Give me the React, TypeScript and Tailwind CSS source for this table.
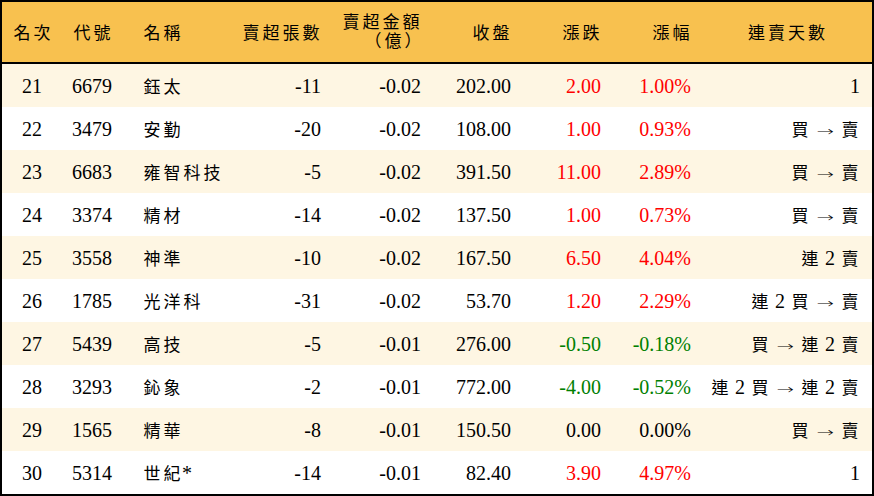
import React from "react";

type Row = {
  rank: string;
  code: string;
  name: string;
  lots: string;
  amt: string;
  close: string;
  chg: string;
  pct: string;
  days: string;
};

const rows: Row[] = [
  { rank: "21", code: "6679", name: "鈺太", lots: "-11", amt: "-0.02", close: "202.00", chg: "2.00", pct: "1.00%", days: "1" },
  { rank: "22", code: "3479", name: "安勤", lots: "-20", amt: "-0.02", close: "108.00", chg: "1.00", pct: "0.93%", days: "買 → 賣" },
  { rank: "23", code: "6683", name: "雍智科技", lots: "-5", amt: "-0.02", close: "391.50", chg: "11.00", pct: "2.89%", days: "買 → 賣" },
  { rank: "24", code: "3374", name: "精材", lots: "-14", amt: "-0.02", close: "137.50", chg: "1.00", pct: "0.73%", days: "買 → 賣" },
  { rank: "25", code: "3558", name: "神準", lots: "-10", amt: "-0.02", close: "167.50", chg: "6.50", pct: "4.04%", days: "連 2 賣" },
  { rank: "26", code: "1785", name: "光洋科", lots: "-31", amt: "-0.02", close: "53.70", chg: "1.20", pct: "2.29%", days: "連 2 買 → 賣" },
  { rank: "27", code: "5439", name: "高技", lots: "-5", amt: "-0.01", close: "276.00", chg: "-0.50", pct: "-0.18%", days: "買 → 連 2 賣" },
  { rank: "28", code: "3293", name: "鈊象", lots: "-2", amt: "-0.01", close: "772.00", chg: "-4.00", pct: "-0.52%", days: "連 2 買 → 連 2 賣" },
  { rank: "29", code: "1565", name: "精華", lots: "-8", amt: "-0.01", close: "150.50", chg: "0.00", pct: "0.00%", days: "買 → 賣" },
  { rank: "30", code: "5314", name: "世紀*", lots: "-14", amt: "-0.01", close: "82.40", chg: "3.90", pct: "4.97%", days: "1" },
];

const isCJK = (ch: string) => /[\u3000-\u9fff\uff00-\uffef]/.test(ch);

const cjkFont = { fontFamily: '"Noto Sans CJK TC", "Noto Sans CJK SC", sans-serif' };
const arrowFont = { fontFamily: '"DejaVu Sans", sans-serif' };

function T({ s }: { s: string }) {
  const parts: React.ReactNode[] = [];
  let buf = "";
  const chars = Array.from(s);
  chars.forEach((ch, i) => {
    if (ch === "→") {
      if (buf) {
        parts.push(buf);
        buf = "";
      }
      parts.push(
        <span
          key={i}
          className="inline-block w-[20px] text-center text-[13px] font-light"
          style={{ ...arrowFont, transform: "scaleX(1.6)" }}
        >
          {ch}
        </span>
      );
    } else if (isCJK(ch)) {
      if (buf) {
        parts.push(buf);
        buf = "";
      }
      parts.push(
        <span key={i} className="inline-block w-[20px] text-center text-[17px]" style={cjkFont}>
          {ch}
        </span>
      );
    } else {
      buf += ch;
    }
  });
  if (buf) parts.push(buf);
  return <>{parts}</>;
}

const colorOf = (v: string) => {
  if (v.startsWith("-")) return "text-[#008000]";
  if (parseFloat(v) === 0) return "text-black";
  return "text-[#ff0000]";
};

const grid = "grid grid-cols-[60px_70px_100px_99px_100px_90px_90px_90px_171px]";

export default function App() {
  return (
    <div
      className="w-[874px] h-[496px] border-2 border-black bg-white text-black text-[20px] leading-none overflow-hidden"
      style={{ fontFamily: '"Liberation Serif", "Noto Sans CJK TC", serif' }}
    >
      <div className={`${grid} h-[62px] bg-[#f8c14f] border-b-2 border-black items-center`}>
        <div className="text-center"><T s="名次" /></div>
        <div className="pl-[10px]"><T s="代號" /></div>
        <div className="pl-[10px]"><T s="名稱" /></div>
        <div className="text-right pr-[10px]"><T s="賣超張數" /></div>
        <div className="pr-[10px] flex flex-col items-end gap-[1px] -mt-[4px]">
          <div className="h-[18px] leading-[18px] whitespace-nowrap"><T s="賣超金額" /></div>
          <div className="h-[18px] leading-[18px] whitespace-nowrap -mr-[2px]"><T s="（億）" /></div>
        </div>
        <div className="text-right pr-[10px]"><T s="收盤" /></div>
        <div className="text-right pr-[10px]"><T s="漲跌" /></div>
        <div className="text-right pr-[10px]"><T s="漲幅" /></div>
        <div className="text-center"><T s="連賣天數" /></div>
      </div>
      {rows.map((r, i) => (
        <div
          key={r.rank}
          className={`${grid} h-[43px] items-center ${i % 2 === 0 ? "bg-[#fef6e3]" : "bg-white"}`}
        >
          <div className="text-center">{r.rank}</div>
          <div className="pl-[10px]">{r.code}</div>
          <div className="pl-[10px]"><T s={r.name} /></div>
          <div className="text-right pr-[10px]">{r.lots}</div>
          <div className="text-right pr-[10px]">{r.amt}</div>
          <div className="text-right pr-[10px]">{r.close}</div>
          <div className={`text-right pr-[10px] ${colorOf(r.chg)}`}>{r.chg}</div>
          <div className={`text-right pr-[10px] ${colorOf(r.pct)}`}>{r.pct}</div>
          <div className="text-right pr-[12px] whitespace-nowrap"><T s={r.days} /></div>
        </div>
      ))}
    </div>
  );
}
